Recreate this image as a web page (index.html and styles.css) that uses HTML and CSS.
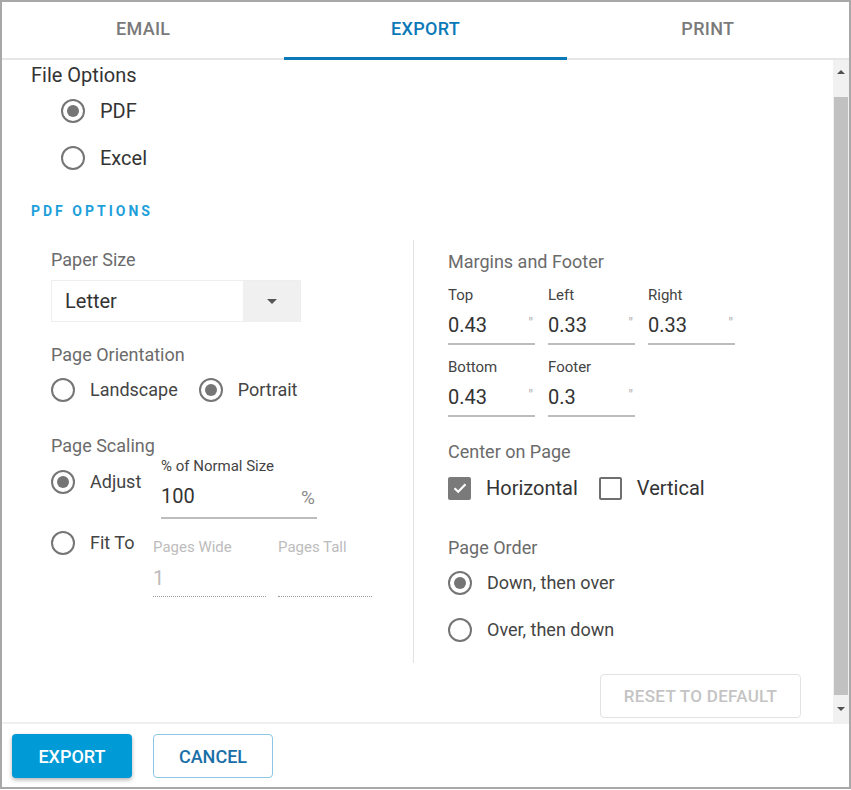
FILE: index.html
```html
<!DOCTYPE html>
<html lang="en">
<head>
    <meta charset="UTF-8">
    <title>Export</title>
    <link rel="stylesheet" href="styles.css">
</head>
<body>
    <div class="dialog">
        <div class="tabs">
            <div class="tab">EMAIL</div>
            <div class="tab active">EXPORT</div>
            <div class="tab">PRINT</div>
        </div>
        <div class="main">
            <div class="content">
                <div class="title">File Options</div>
                <div class="file-group">
                    <label class="option tall"><span class="radio on"></span>PDF</label>
                    <label class="option tall"><span class="radio"></span>Excel</label>
                </div>
                <div class="section-title">PDF OPTIONS</div>
                <div class="columns">
                    <div class="col-left">
                        <div class="group-title">Paper Size</div>
                        <div class="select">
                            <span class="select-value">Letter</span>
                            <span class="select-arrow"><span class="caret"></span></span>
                        </div>
                        <div class="group-title orient-title">Page Orientation</div>
                        <div class="inline-row orient-row">
                            <label class="option"><span class="radio"></span>Landscape</label>
                            <label class="option"><span class="radio on"></span>Portrait</label>
                        </div>
                        <div class="group-title scaling-title">Page Scaling</div>
                        <div class="scale-row adjust">
                            <label class="option"><span class="radio on"></span>Adjust</label>
                            <div class="field pct">
                                <div class="field-label">% of Normal Size</div>
                                <div class="field-input">
                                    <span class="val">100</span>
                                    <span class="unit">%</span>
                                </div>
                            </div>
                        </div>
                        <div class="scale-row fit">
                            <label class="option"><span class="radio"></span>Fit To</label>
                            <div class="fit-fields">
                                <div class="field disabled wide">
                                    <div class="field-label">Pages Wide</div>
                                    <div class="field-input"><span class="val">1</span></div>
                                </div>
                                <div class="field disabled tall-f">
                                    <div class="field-label">Pages Tall</div>
                                    <div class="field-input"><span class="val">&nbsp;</span></div>
                                </div>
                            </div>
                        </div>
                    </div>
                    <div class="col-right">
                        <div class="group-title">Margins and Footer</div>
                        <div class="margin-row">
                            <div class="field mfield">
                                <div class="field-label">Top</div>
                                <div class="field-input"><span class="val">0.43</span><span class="inch">"</span></div>
                            </div>
                            <div class="field mfield">
                                <div class="field-label">Left</div>
                                <div class="field-input"><span class="val">0.33</span><span class="inch">"</span></div>
                            </div>
                            <div class="field mfield">
                                <div class="field-label">Right</div>
                                <div class="field-input"><span class="val">0.33</span><span class="inch">"</span></div>
                            </div>
                        </div>
                        <div class="margin-row">
                            <div class="field mfield">
                                <div class="field-label">Bottom</div>
                                <div class="field-input"><span class="val">0.43</span><span class="inch">"</span></div>
                            </div>
                            <div class="field mfield">
                                <div class="field-label">Footer</div>
                                <div class="field-input"><span class="val">0.3</span><span class="inch">"</span></div>
                            </div>
                        </div>
                        <div class="group-title center-title">Center on Page</div>
                        <div class="inline-row check-row">
                            <label class="option big">
                                <span class="checkbox on">
                                    <svg width="16" height="16" viewBox="0 0 16 16"><path d="M2.5 8.2 L6.2 11.8 L13.5 4.2" fill="none" stroke="#fff" stroke-width="2.2"/></svg>
                                </span>Horizontal
                            </label>
                            <label class="option big"><span class="checkbox"></span>Vertical</label>
                        </div>
                        <div class="group-title order-title">Page Order</div>
                        <label class="option tall"><span class="radio on"></span>Down, then over</label>
                        <label class="option tall"><span class="radio"></span>Over, then down</label>
                    </div>
                </div>
                <div class="actions">
                    <button class="reset">RESET TO DEFAULT</button>
                </div>
            </div>
            <div class="scrollbar">
                <div class="sb-up"><span class="arrow-up"></span></div>
                <div class="sb-thumb"></div>
                <div class="sb-down"><span class="arrow-down"></span></div>
            </div>
        </div>
        <div class="footer">
            <button class="btn btn-primary">EXPORT</button>
            <button class="btn btn-outline">CANCEL</button>
        </div>
    </div>
</body>
</html>
```

FILE: styles.css
```css
* {
    box-sizing: border-box;
}
body {
    margin: 0;
    font-family: Roboto, "Liberation Sans", sans-serif;
    background-color: #fff;
    color: #333;
}
.dialog {
    width: 851px;
    height: 789px;
    border: 2px solid #a8a8a8;
    display: flex;
    flex-direction: column;
    background-color: #fff;
}
.tabs {
    display: flex;
    height: 58px;
    flex-shrink: 0;
    border-bottom: 2px solid #e6e6e6;
}
.tab {
    flex: 1;
    height: 58px;
    margin-bottom: -2px;
    display: flex;
    align-items: center;
    justify-content: center;
    padding-bottom: 6px;
    font-size: 18px;
    font-weight: 500;
    letter-spacing: 0.3px;
    color: #7a7a7a;
}
.tab.active {
    color: #0b79b8;
    padding-bottom: 3px;
    border-bottom: 3px solid #0b79b8;
}
.main {
    flex: 1;
    display: flex;
    min-height: 0;
    overflow: hidden;
}
.content {
    flex: 1;
    padding: 3px 32px 0 29px;
    overflow: hidden;
}
.title {
    font-size: 20px;
    line-height: 24px;
    color: #333;
}
.file-group {
    padding-left: 30px;
}
.option {
    display: flex;
    align-items: center;
    gap: 15px;
    font-size: 18px;
    line-height: 24px;
    color: #444;
    height: 24px;
}
.option.tall {
    height: 47px;
}
.file-group .option {
    font-size: 20px;
    color: #333;
}
.option.big {
    font-size: 20px;
    color: #333;
}
.radio {
    width: 24px;
    height: 24px;
    flex-shrink: 0;
    border: 2px solid #757575;
    border-radius: 50%;
    display: flex;
    align-items: center;
    justify-content: center;
}
.radio.on::after {
    content: "";
    width: 12px;
    height: 12px;
    border-radius: 50%;
    background-color: #757575;
}
.checkbox {
    width: 23px;
    height: 23px;
    flex-shrink: 0;
    border: 2px solid #6f6f6f;
    border-radius: 2px;
    display: flex;
    align-items: center;
    justify-content: center;
}
.checkbox.on {
    background-color: #7a7a7a;
    border-color: #7a7a7a;
}
.section-title {
    margin-top: 22px;
    font-size: 14px;
    line-height: 16px;
    font-weight: bold;
    letter-spacing: 3px;
    color: #1e9fda;
}
.columns {
    display: flex;
    margin-top: 21px;
    margin-left: 20px;
}
.col-left {
    width: 363px;
    padding-top: 9px;
    border-right: 1px solid #e2e2e2;
}
.col-right {
    flex: 1;
    padding: 11px 0 10px 34px;
}
.group-title {
    font-size: 18px;
    line-height: 22px;
    color: #6b6b6b;
}
.select {
    display: flex;
    width: 250px;
    height: 42px;
    margin-top: 9px;
    border: 1px solid #eeeeee;
}
.select-value {
    flex: 1;
    padding-left: 13px;
    font-size: 20px;
    line-height: 40px;
    color: #333;
}
.select-arrow {
    width: 57px;
    background-color: #f0f0f0;
    display: flex;
    align-items: center;
    justify-content: center;
}
.caret {
    width: 0;
    height: 0;
    border-left: 5px solid transparent;
    border-right: 5px solid transparent;
    border-top: 5px solid #555;
}
.orient-title {
    margin-top: 22px;
}
.inline-row {
    display: flex;
    align-items: center;
    gap: 21px;
}
.orient-row {
    height: 30px;
    margin-top: 9px;
}
.scaling-title {
    margin-top: 30px;
}
.scale-row {
    display: flex;
    align-items: flex-start;
}
.scale-row .option {
    margin-top: 13px;
}
.adjust .option {
    width: 110px;
}
.fit {
    margin-top: 12px;
}
.fit .option {
    width: 102px;
    margin-top: 0;
}
.field-label {
    font-size: 15px;
    line-height: 18px;
    color: #444;
}
.field-input {
    display: flex;
    justify-content: space-between;
    margin-top: 9px;
    padding-bottom: 6px;
    border-bottom: 2px solid #bdbdbd;
}
.val {
    font-size: 20px;
    line-height: 24px;
    color: #333;
}
.pct {
    width: 156px;
}
.pct .field-input {
    padding-bottom: 7px;
}
.unit {
    font-size: 19px;
    line-height: 24px;
    color: #8a8a8a;
    margin-top: 2px;
    padding-right: 2px;
}
.fit-fields {
    display: flex;
    gap: 12px;
    margin-top: 7px;
}
.field.disabled .field-label,
.field.disabled .val {
    color: #bcbcbc;
}
.field.disabled .field-input {
    margin-top: 10px;
    padding-bottom: 6px;
    border-bottom: 1px dotted #9a9a9a;
}
.wide {
    width: 113px;
}
.tall-f {
    width: 94px;
}
.margin-row {
    display: flex;
    gap: 13px;
    margin-top: 13px;
}
.mfield {
    width: 87px;
}
.inch {
    font-size: 15px;
    line-height: 15px;
    color: #b0b0b0;
    padding-right: 2px;
    margin-top: 3px;
}
.center-title {
    margin-top: 24px;
}
.check-row {
    height: 24px;
    margin-top: 13px;
}
.order-title {
    margin-top: 37px;
}
.actions {
    display: flex;
    justify-content: flex-end;
    margin-top: 11px;
}
.reset {
    width: 201px;
    height: 44px;
    background-color: #fff;
    border: 1px solid #e3e3e3;
    border-radius: 4px;
    font-family: inherit;
    font-size: 17px;
    font-weight: 500;
    letter-spacing: 0.3px;
    color: #c4c4c4;
}
.scrollbar {
    width: 16px;
    flex-shrink: 0;
    display: flex;
    flex-direction: column;
    background-color: #f1f1f1;
}
.sb-up {
    height: 37px;
    display: flex;
    justify-content: center;
    padding-top: 10px;
}
.sb-thumb {
    flex: 1;
    margin: 0 1px;
    background-color: #c1c1c1;
}
.sb-down {
    height: 27px;
    display: flex;
    justify-content: center;
    padding-top: 12px;
}
.arrow-up, .arrow-down {
    width: 0;
    height: 0;
    border-left: 4px solid transparent;
    border-right: 4px solid transparent;
}
.arrow-up {
    border-bottom: 4px solid #505050;
}
.arrow-down {
    border-top: 4px solid #505050;
}
.footer {
    display: flex;
    gap: 21px;
    flex-shrink: 0;
    padding: 10px 10px 9px;
    border-top: 2px solid #f0f0f0;
}
.btn {
    width: 120px;
    height: 44px;
    border-radius: 4px;
    font-family: inherit;
    font-size: 18px;
    font-weight: 500;
}
.btn-primary {
    background-color: #009ad6;
    color: #fff;
    border: none;
    box-shadow: 0 2px 4px rgba(0, 0, 0, 0.3);
}
.btn-outline {
    background-color: #fff;
    color: #1a6fa8;
    border: 1px solid #8dc6e4;
}
```
